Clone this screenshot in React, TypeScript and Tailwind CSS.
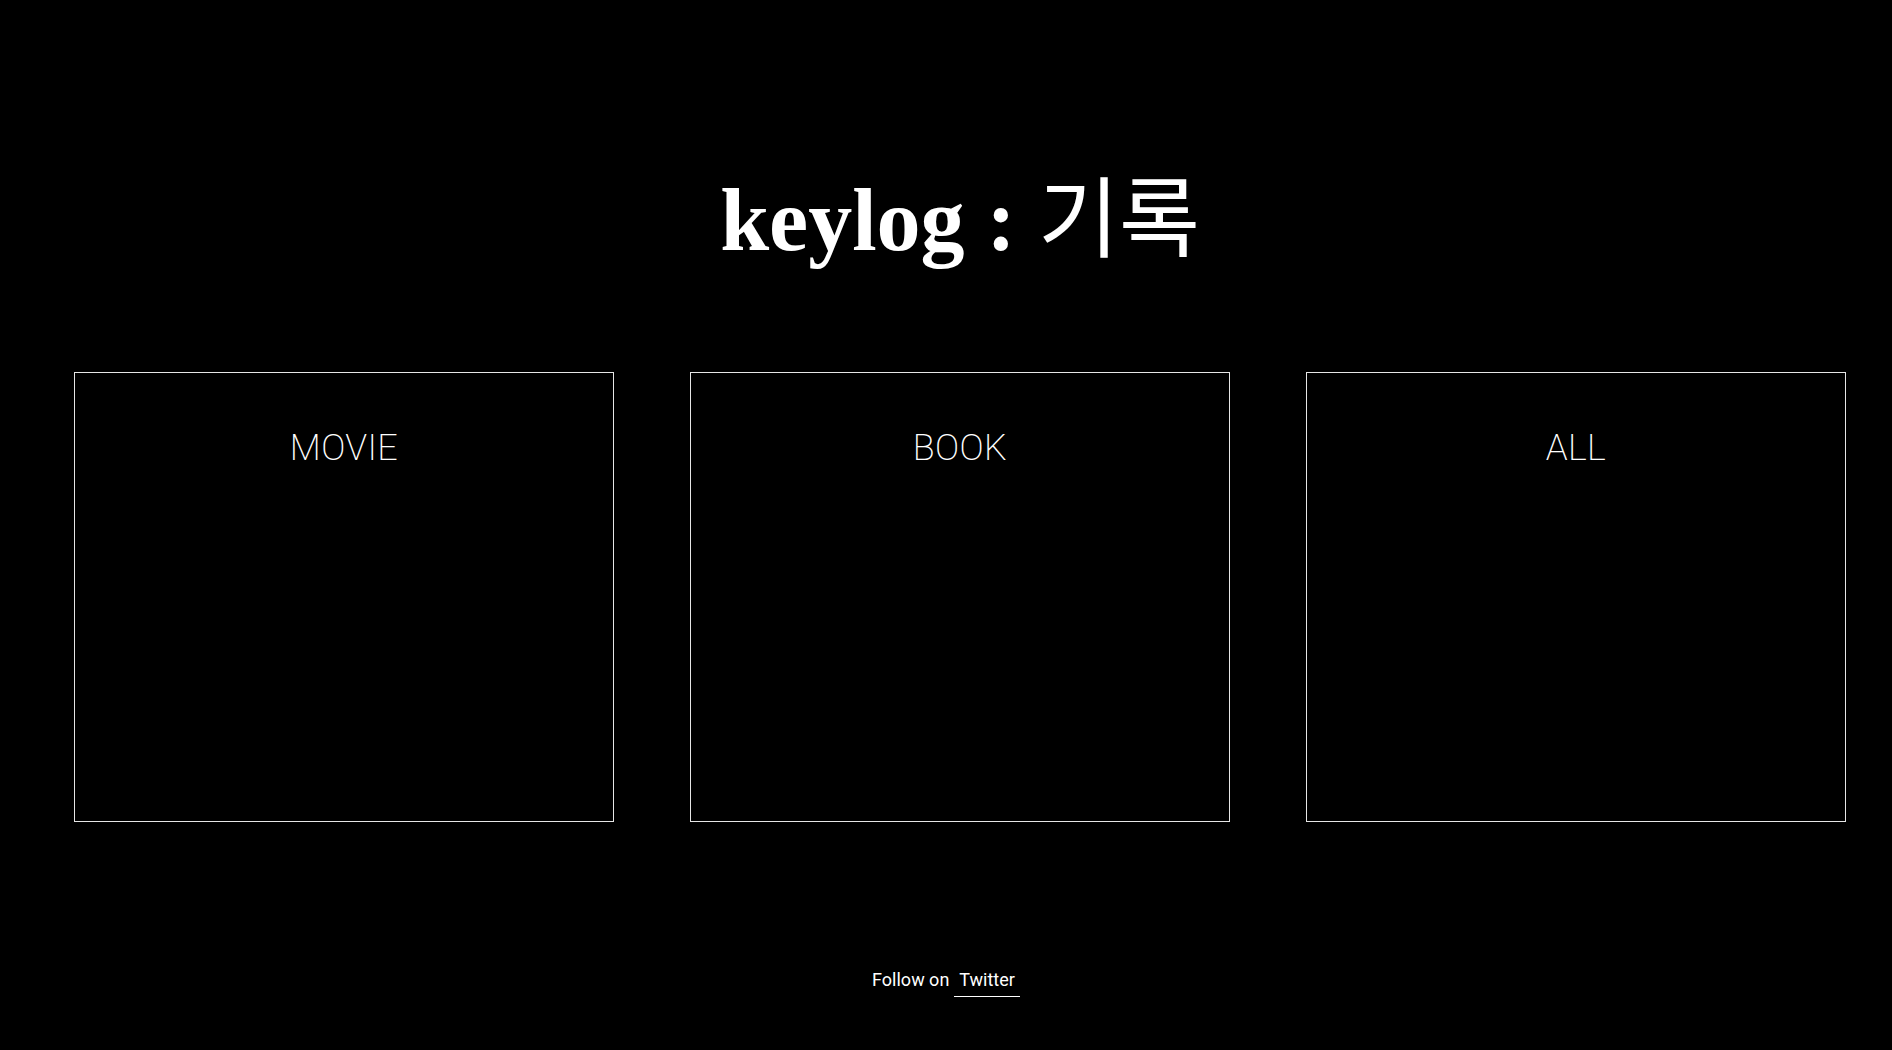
const cards = ["MOVIE", "BOOK", "ALL"];

const App = () => (
  <div className="min-h-[1050px] w-full bg-black text-white font-['Roboto','Liberation_Sans',sans-serif]">
    <header className="pl-[28px] pt-[177px] text-center">
      <h1 className="text-[88px] leading-none font-bold font-['Liberation_Serif','Noto_Sans_CJK_KR',serif]">
        keylog : <span className="font-normal">기록</span>
      </h1>
    </header>

    <main className="mt-[107px] flex gap-[76px] pl-[74px] pr-[46px]">
      {cards.map((label) => (
        <a
          key={label}
          href="#"
          className="block h-[450px] w-[540px] border border-[#e6e6e6] pt-[57px] text-center"
        >
          <span className="text-[36px] leading-none font-extralight tracking-[0.01em] text-white">{label}</span>
        </a>
      ))}
    </main>

    <footer className="mt-[148px] flex justify-center text-[18px] leading-[20px]">
      <span>Follow on</span>
      <a href="#" className="ml-[5px] border-b border-white px-[5px] pb-[6px]">
        Twitter
      </a>
    </footer>
  </div>
);

export default App;
